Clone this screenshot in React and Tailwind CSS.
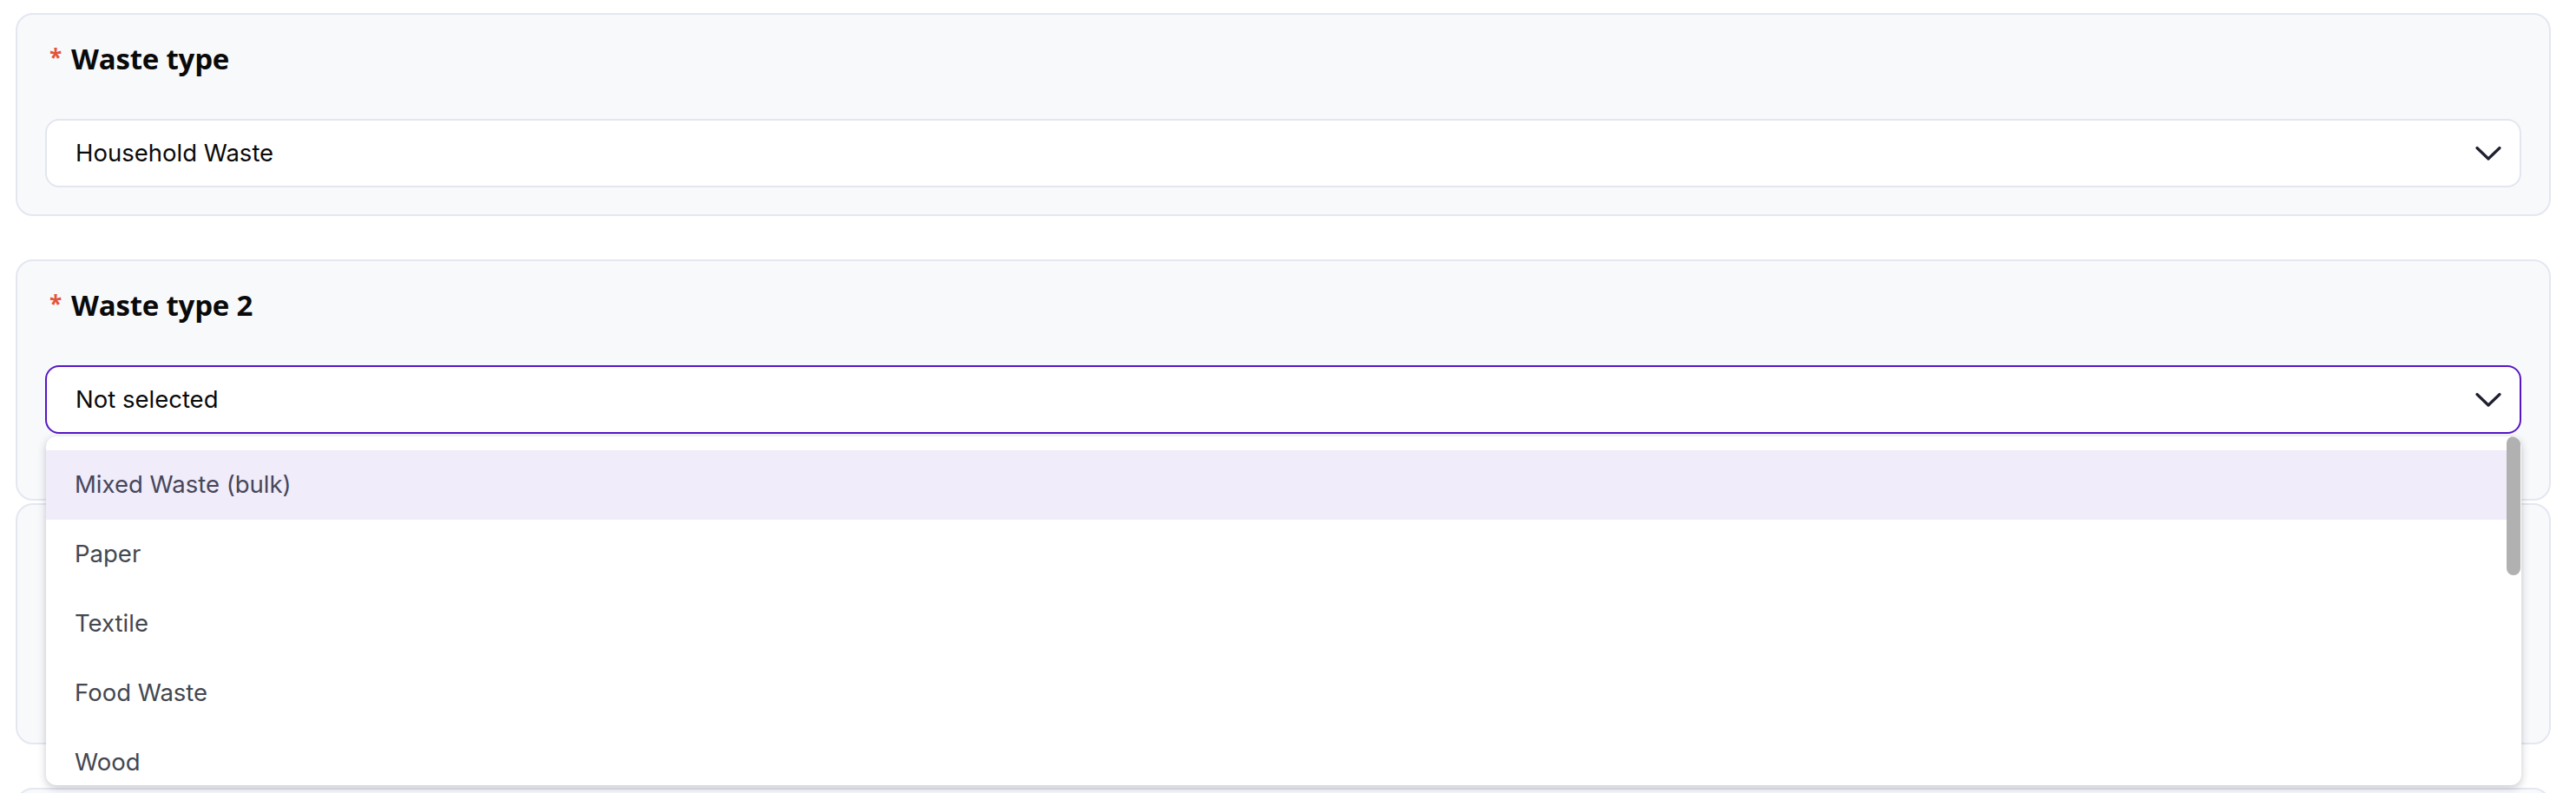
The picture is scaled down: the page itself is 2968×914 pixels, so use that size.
import React from "react";

const Chevron = () => (
  <svg width="30" height="18" viewBox="0 0 30 18" fill="none" className="shrink-0">
    <path d="M2 2.5 15 15 28 2.5" stroke="#1f2130" strokeWidth="3.2" strokeLinecap="round" strokeLinejoin="round" />
  </svg>
);

const Label = ({ children }) => (
  <div className="flex items-start h-[44px] pl-[5px]" style={{ fontFamily: "'Open Sans', sans-serif" }}>
    <span className="w-[25px] text-[#e4533a] text-[26px] font-bold leading-[40px]">*</span>
    <span className="text-[33px] font-bold text-[#0a0a0a] leading-[44px] tracking-[-0.2px]">{children}</span>
  </div>
);

const Select = ({ value, open }) => (
  <div
    className={
      open
        ? "flex items-center justify-between h-[79px] rounded-[16px] border-2 border-[#5517c4] bg-white pl-[33px] pr-[21px]"
        : "flex items-center justify-between h-[79px] rounded-[16px] border-2 border-[#e3e6ef] bg-white pl-[33px] pr-[21px]"
    }
  >
    <span className="text-[27.5px] text-[#0a0a0a]">{value}</span>
    <Chevron />
  </div>
);

const options = ["Mixed Waste (bulk)", "Paper", "Textile", "Food Waste", "Wood"];

export default function App() {
  return (
    <div className="w-[2968px] h-[914px] overflow-hidden bg-white pl-[18px] pr-[29px] pt-[15px]" style={{ fontFamily: "Inter, sans-serif" }}>
      <div className="flex flex-col">
        {/* card 1 */}
        <div className="rounded-[20px] border-2 border-[#e4e7f0] bg-[#f8f9fb] pt-[29px] px-[32px] pb-[31px]">
          <Label>Waste type</Label>
          <div className="mt-[47px]">
            <Select value="Household Waste" />
          </div>
        </div>

        {/* card 2 with open dropdown */}
        <div className="relative z-10 mt-[50px] rounded-[20px] border-2 border-[#e4e7f0] bg-[#f8f9fb] pt-[29px] px-[32px] pb-[75px]">
          <Label>Waste type 2</Label>
          <div className="mt-[47px] relative">
            <Select value="Not selected" open />
            <div className="absolute left-[1px] right-0 top-[82px] h-[402px] flex rounded-[12px] bg-white shadow-[0_3px_10px_rgba(30,35,60,0.25)] overflow-hidden">
              <div className="flex-1 pt-[16px] overflow-hidden">
                {options.map((o, i) => (
                  <div
                    key={o}
                    className={
                      i === 0
                        ? "h-[80px] flex items-center pl-[33px] text-[27.5px] text-[#45465a] bg-[#f0ecf9]"
                        : "h-[80px] flex items-center pl-[33px] text-[27.5px] text-[#434750]"
                    }
                  >
                    {o}
                  </div>
                ))}
              </div>
              <div className="w-[17px] shrink-0 pr-[1px]">
                <div className="h-[160px] rounded-full bg-[#b1b1b1]" />
              </div>
            </div>
          </div>
        </div>

        {/* card 3 (behind dropdown) */}
        <div className="mt-[3px] h-[278px] rounded-[20px] border-2 border-[#e4e7f0] bg-[#f8f9fb]" />

        {/* card 4 */}
        <div className="mt-[50px] h-[120px] rounded-[20px] border-2 border-[#e4e7f0] bg-[#f8f9fb]" />
      </div>
    </div>
  );
}
